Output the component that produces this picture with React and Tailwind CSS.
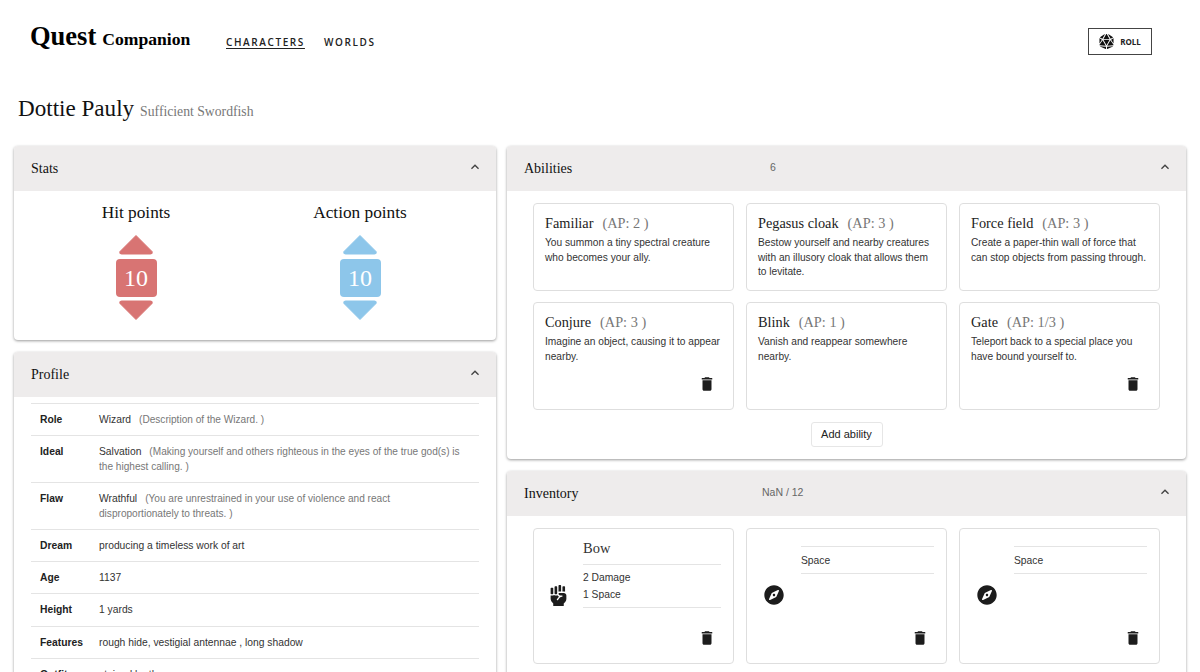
import React from "react";
import { FaDiceD20, FaFistRaised, FaCompass } from "react-icons/fa";
import { MdDelete, MdExpandLess } from "react-icons/md";

const serif = "font-['Liberation_Serif',serif]";

const abilitiesTop = [
  { name: "Familiar", ap: "2", text: "You summon a tiny spectral creature who becomes your ally." },
  { name: "Pegasus cloak", ap: "3", text: "Bestow yourself and nearby creatures with an illusory cloak that allows them to levitate." },
  { name: "Force field", ap: "3", text: "Create a paper-thin wall of force that can stop objects from passing through." },
];

const abilitiesBottom = [
  { name: "Conjure", ap: "3", text: "Imagine an object, causing it to appear nearby.", remove: true },
  { name: "Blink", ap: "1", text: "Vanish and reappear somewhere nearby." },
  { name: "Gate", ap: "1/3", text: "Teleport back to a special place you have bound yourself to.", remove: true },
];

const profile = [
  { label: "Role", value: "Wizard", note: "(Description of the Wizard. )" },
  { label: "Ideal", value: "Salvation", note: "(Making yourself and others righteous in the eyes of the true god(s) is the highest calling. )" },
  { label: "Flaw", value: "Wrathful", note: "(You are unrestrained in your use of violence and react disproportionately to threats. )" },
  { label: "Dream", value: "producing a timeless work of art" },
  { label: "Age", value: "1137" },
  { label: "Height", value: "1 yards" },
  { label: "Features", value: "rough hide, vestigial antennae , long shadow" },
  { label: "Outfit", value: "stained leather" },
];

function Panel({ title, count, countClass, children, className }) {
  return (
    <section className={`bg-white rounded-[4px] shadow-[0_1px_3px_rgba(0,0,0,0.4)] overflow-hidden ${className}`}>
      <div className="h-[45px] bg-[#eeecec] flex items-center pl-[17px] pr-[13px] relative">
        <h2 className={`${serif} text-[14px] text-[#111]`}>{title}</h2>
        {count && <span className={`absolute top-[14px] text-[10.5px] text-[#666] ${countClass}`}>{count}</span>}
        <MdExpandLess className="ml-auto mb-[3px] text-[#444]" size={16} />
      </div>
      {children}
    </section>
  );
}

function Counter({ label, fill, text }) {
  return (
    <div className="w-[224px] flex flex-col items-center">
      <h3 className={`${serif} text-[17.3px] leading-[22px] text-[#111] mt-[11px] mb-[10px]`}>{label}</h3>
      <svg width="36" height="21" viewBox="0 0 36 21" className={text}>
        <path d="M18 1.5 L34 17.5 Q35 20 32.5 20 L3.5 20 Q1 20 2 17.5 Z" fill="currentColor" stroke="currentColor" strokeWidth="1" strokeLinejoin="round" />
      </svg>
      <div className={`w-[41px] h-[38px] rounded-[4px] mt-[4px] mb-[3px] flex items-center justify-center text-white text-[24px] ${serif} ${fill}`}>
        10
      </div>
      <svg width="36" height="21" viewBox="0 0 36 21" className={text}>
        <path d="M18 19.5 L34 3.5 Q35 1 32.5 1 L3.5 1 Q1 1 2 3.5 Z" fill="currentColor" stroke="currentColor" strokeWidth="1" strokeLinejoin="round" />
      </svg>
    </div>
  );
}

function AbilityCard({ ability, className }) {
  return (
    <div className={`relative border border-[#dedede] rounded-[4px] px-[11px] pt-[9px] ${className}`}>
      <h4 className={`${serif} text-[14.3px] leading-[20px] text-[#222]`}>
        {ability.name}
        <span className="text-[#777] ml-[9px]">(AP: {ability.ap} )</span>
      </h4>
      <p className="text-[10.2px] leading-[14.5px] text-[#333] mt-[3px]">{ability.text}</p>
      {ability.remove && (
        <MdDelete className="absolute right-[17px] bottom-[16px] text-[#1c1c1c]" size={18} />
      )}
    </div>
  );
}

function ItemCard({ icon, name, lines, offset }) {
  return (
    <div className="relative h-[136px] border border-[#dedede] rounded-[4px] flex items-center pr-[12px]">
      <div className={`shrink-0 flex justify-center mb-[2px] text-[#1c1c1c] ${offset}`}>{icon}</div>
      <div className="flex-1 self-start">
        {name ? (
          <div className={`${serif} text-[14.5px] h-[35px] pt-[10px] leading-[18px] text-[#333]`}>{name}</div>
        ) : (
          <div className="h-[17px]" />
        )}
        <div className="min-h-[28px] flex flex-col justify-center border-y border-[#e4e4e4] py-[4px] text-[10.3px] leading-[17px] text-[#333]">
          {lines.map((line) => (
            <div key={line}>{line}</div>
          ))}
        </div>
      </div>
      <MdDelete className="absolute right-[17px] bottom-[16px] text-[#1c1c1c]" size={18} />
    </div>
  );
}

export default function App() {
  return (
    <div className="h-[672px] overflow-hidden bg-white font-['Liberation_Sans',sans-serif] text-[#222]">
      <header className="h-[76px] pl-[30px] pr-[48px] flex items-center">
        <div className={`${serif} font-bold text-black w-[196px] mb-[2px]`}>
          <span className="text-[26.5px]">Quest</span>
          <span className="text-[17.6px] ml-[6px]">Companion</span>
        </div>
        <nav className="flex gap-[19px] font-['Open_Sans',sans-serif] font-semibold text-[10px] tracking-[1.6px] text-[#222] mt-[8px]">
          <a className="underline underline-offset-[2px]">CHARACTERS</a>
          <a>WORLDS</a>
        </nav>
        <button className="ml-auto w-[64px] h-[27px] mt-[7px] border border-[#444] flex items-center justify-center gap-[6px] font-['Open_Sans',sans-serif] font-bold text-[8px] text-[#222]">
          <FaDiceD20 size={15} className="text-[#111]" />
          ROLL
        </button>
      </header>

      <div className="px-[18px] h-[70px] pt-[17px]">
        <span className={`${serif} text-[23.1px] leading-[30px] text-[#111]`}>Dottie Pauly</span>
        <span className={`${serif} text-[13.7px] text-[#777] ml-[6px]`}>Sufficient Swordfish</span>
      </div>

      <main className="px-[14px] flex gap-[11px] items-start">
        <div className="w-[482px] shrink-0 flex flex-col gap-[12px]">
          <Panel title="Stats" className="h-[194px]">
            <div className="flex justify-center pr-[14px]">
              <Counter label="Hit points" fill="bg-[#d87473]" text="text-[#d87473]" />
              <Counter label="Action points" fill="bg-[#8dc6ea]" text="text-[#8dc6ea]" />
            </div>
          </Panel>
          <Panel title="Profile">
            <div className="px-[17px] pt-[6px]">
              {profile.map((row) => (
                <div key={row.label} className="flex border-t border-[#e4e4e4] pl-[9px] pr-[12px] pt-[9px] pb-[7.8px] text-[10.3px] leading-[14.5px]">
                  <div className="w-[59px] shrink-0 font-bold text-[#222]">{row.label}</div>
                  <div className="text-[#333]">
                    {row.value}
                    {row.note && <span className="text-[#777] text-[10.1px] ml-[8px]">{row.note}</span>}
                  </div>
                </div>
              ))}
            </div>
          </Panel>
        </div>

        <div className="flex-1 flex flex-col gap-[12px]">
          <Panel title="Abilities" count="6" countClass="left-[263px]" className="h-[313px]">
            <div className="px-[26px] pt-[12px]">
              <div className="grid grid-cols-3 gap-[12px]">
                {abilitiesTop.map((a) => (
                  <AbilityCard key={a.name} ability={a} className="h-[88px]" />
                ))}
              </div>
              <div className="grid grid-cols-3 gap-[12px] mt-[11px]">
                {abilitiesBottom.map((a) => (
                  <AbilityCard key={a.name} ability={a} className="h-[108px]" />
                ))}
              </div>
              <div className="flex justify-center mt-[12px]">
                <button className="h-[25px] w-[72px] border border-[#e6e6e6] rounded-[3px] text-[11px] text-[#222]">
                  Add ability
                </button>
              </div>
            </div>
          </Panel>
          <Panel title="Inventory" count="NaN / 12" countClass="left-[255px]" className="h-[300px]">
            <div className="grid grid-cols-3 gap-[12px] px-[26px] pt-[12px]">
              <ItemCard icon={<FaFistRaised size={21} />} name="Bow" lines={["2 Damage", "1 Space"]} offset="w-[49px]" />
              <ItemCard icon={<FaCompass size={20} />} lines={["Space"]} offset="w-[54px]" />
              <ItemCard icon={<FaCompass size={20} />} lines={["Space"]} offset="w-[54px]" />
            </div>
          </Panel>
        </div>
      </main>
    </div>
  );
}
